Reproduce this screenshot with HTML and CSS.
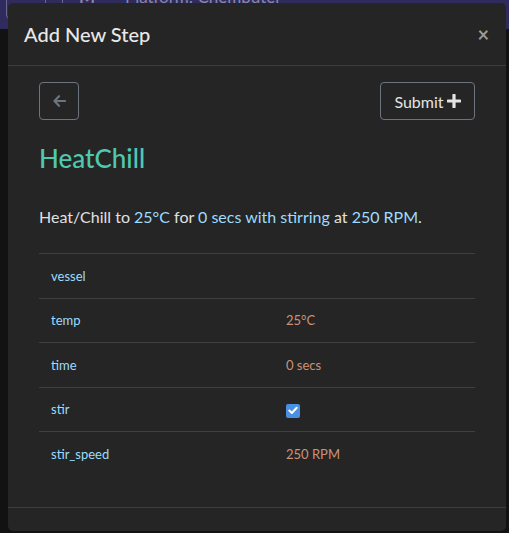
FILE: index.html
```html
<!DOCTYPE html>
<html>
<head>
<meta charset="utf-8">
<link rel="stylesheet" href="styles.css">
</head>
<body>
<div class="page">
  <nav class="navbar">
    <span class="nav-btn"></span>
    <span class="nav-sep"></span>
    <span class="nav-icon">M</span>
    <span class="nav-title">Platform: Chemputer</span>
  </nav>
  <div class="page-main"></div>
</div>

<div class="modal">
  <div class="modal-header">
    <h5 class="modal-title">Add New Step</h5>
    <span class="close">&times;</span>
  </div>
  <div class="modal-body">
    <div class="container">
      <div class="toolbar">
        <button class="btn btn-back" type="button">
          <svg width="13" height="12" viewBox="0 0 13 12"><path d="M6 1.2 1.5 6 6 10.8M1.8 6H12" fill="none" stroke="#6c757d" stroke-width="2.2" stroke-linecap="round" stroke-linejoin="round"/></svg>
        </button>
        <button class="btn btn-submit" type="button">Submit
          <svg width="14" height="14" viewBox="0 0 14 14"><path d="M7 1v12M1 7h12" stroke="#e4e4e4" stroke-width="3.2" stroke-linecap="round"/></svg>
        </button>
      </div>
      <h3 class="step-name">HeatChill</h3>
      <p class="sentence">Heat/Chill to <span class="hl">25°C</span> for <span class="hl">0 secs</span> <span class="hl">with stirring</span> at <span class="hl">250 RPM</span>.</p>
      <div class="props">
        <div class="row"><div class="key">vessel</div><div class="val"></div></div>
        <div class="row"><div class="key">temp</div><div class="val">25°C</div></div>
        <div class="row"><div class="key">time</div><div class="val">0 secs</div></div>
        <div class="row"><div class="key">stir</div><div class="val"><span class="check"><svg width="10" height="9" viewBox="0 0 10 9"><path d="M1.3 4.6 3.9 7 8.7 1.8" fill="none" stroke="#fff" stroke-width="2" stroke-linecap="round" stroke-linejoin="round"/></svg></span></div></div>
        <div class="row"><div class="key">stir_speed</div><div class="val">250 RPM</div></div>
      </div>
    </div>
  </div>
  <div class="modal-footer"></div>
</div>
</body>
</html>
```

FILE: styles.css
```css
* { box-sizing: border-box; }
html, body { margin: 0; padding: 0; }
body {
  background: #121212;
  font-family: "Lato", "Open Sans", sans-serif;
  color: #e0e0e0;
  width: 509px;
  height: 533px;
  overflow: hidden;
}
.page { height: 533px; }
.navbar {
  height: 29px;
  background: #2f2b5c;
  display: flex;
  align-items: flex-start;
  gap: 16px;
  padding: 0 6px;
  color: #8a87a8;
  font-size: 17px;
  line-height: 20px;
}
.nav-btn { width: 40px; height: 28px; margin-top: -9px; border: 1px solid #6a6790; border-radius: 4px; }
.nav-sep { width: 1px; height: 16px; margin-top: -8px; background: #6a6790; }
.nav-icon { font-weight: 700; margin-top: -13px; }
.nav-title { margin-left: 14px; margin-top: -13px; }
.page-main { height: 504px; background: #121212; }

.modal {
  position: absolute;
  left: 8px;
  top: 3px;
  width: 498px;
  height: 528px;
  background: #252525;
  border-radius: 5px;
  display: flex;
  flex-direction: column;
}
.modal-header {
  display: flex;
  align-items: center;
  justify-content: space-between;
  padding: 16px 16px 15px;
  border-bottom: 1px solid #3d3d3d;
}
.modal-title {
  margin: 0;
  font-size: 20px;
  line-height: 31px;
  font-weight: 500;
  color: #e8e8e8;
}
.close {
  font-size: 20px;
  font-weight: 700;
  color: #9a9a9a;
  line-height: 1;
  margin-right: 1px;
  margin-top: -2px;
}
.modal-body { flex: 1; padding: 16px; }
.container { padding: 0 15px; }
.toolbar { display: flex; justify-content: space-between; }
.btn {
  height: 38px;
  background: transparent;
  border: 1px solid #6c757d;
  border-radius: 4px;
  display: flex;
  align-items: center;
  justify-content: center;
  font-family: inherit;
  font-size: 16px;
  color: #e4e4e4;
}
.btn-back { width: 40px; padding: 0; }
.btn-submit { width: 95px; gap: 3px; padding: 0 10px; }
.step-name {
  margin: 22px 0 0;
  font-size: 26px;
  line-height: 33px;
  font-weight: 500;
  color: #4ec9b0;
}
.sentence {
  margin: 30px 0 0;
  font-size: 16px;
  line-height: 24px;
  color: #e0e0e0;
}
.hl { color: #9cdcfe; }
.props { margin-top: 24px; }
.row {
  display: grid;
  grid-template-columns: 235px 1fr;
  border-top: 1px solid #3f3f3f;
  height: 44.5px;
  align-items: center;
  font-size: 13px;
}
.key { padding: 0 12px; color: #9cdcfe; }
.val { padding: 0 12px; color: #ce9178; }
.check {
  display: inline-flex;
  width: 14px;
  height: 14px;
  background: #4a90e2;
  border-radius: 2px;
  align-items: center;
  justify-content: center;
  vertical-align: middle;
}
.modal-footer {
  height: 24px;
  border-top: 1px solid #3d3d3d;
}
```
